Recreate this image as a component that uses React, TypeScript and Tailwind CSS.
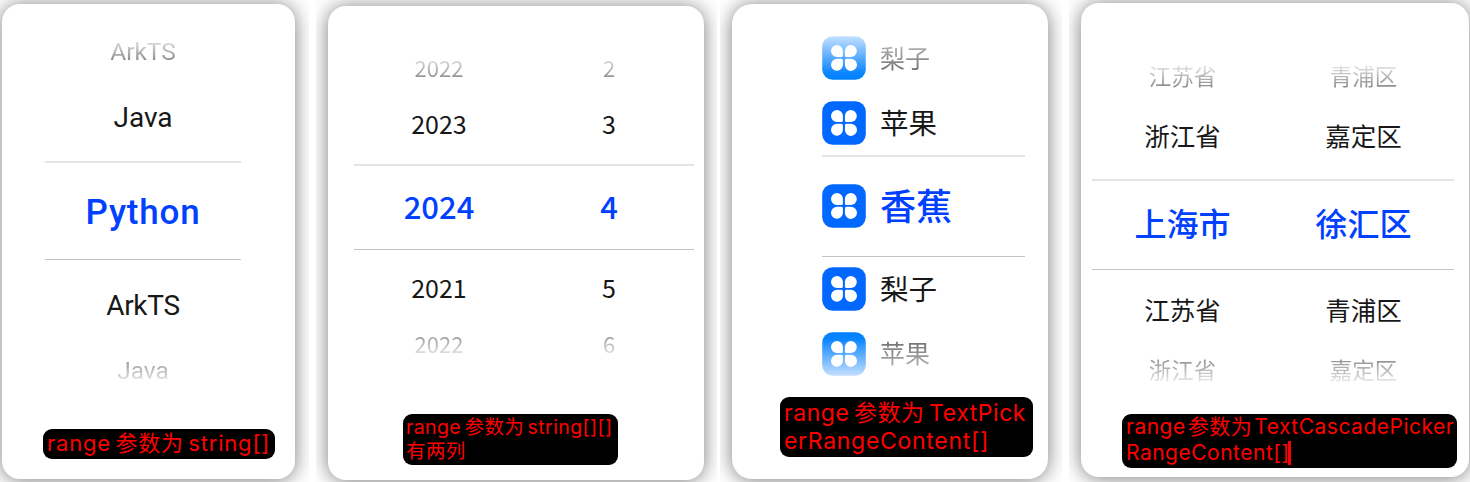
import React from "react";
import { clsx } from "clsx";

const LATIN = "font-['Roboto','Noto_Sans_CJK_SC',sans-serif]";
const CJK = "font-['Noto_Sans_CJK_SC',sans-serif]";
const LABEL = "font-['Inter','Noto_Sans_CJK_SC',sans-serif]";

const FADE_TOP = "[mask-image:linear-gradient(to_bottom,rgba(0,0,0,0.1)_20%,rgba(0,0,0,0.5)_75%)]";
const FADE_BOTTOM = "[mask-image:linear-gradient(to_top,rgba(0,0,0,0.08)_20%,rgba(0,0,0,0.46)_75%)]";

function Panel({ frame, card, children }: { frame: string; card: string; children: React.ReactNode }) {
  return (
    <section className={clsx("flex h-[482px] shrink-0 overflow-hidden", frame)}>
      <div className={clsx("flex shrink-0 flex-col bg-white shadow-[0_1px_20px_rgba(0,0,0,0.52)]", card)}>
        {children}
      </div>
    </section>
  );
}

function Row({ items, className }: { items: string[]; className: string }) {
  return (
    <div className={clsx("flex h-10 items-center whitespace-nowrap leading-none text-[#181818]", className)}>
      {items.map((item) => (
        <span key={item} className="flex-1 text-center">
          {item}
        </span>
      ))}
    </div>
  );
}

function Selected({ items, className }: { items: string[]; className: string }) {
  return (
    <div
      className={clsx(
        "flex items-center whitespace-nowrap border-b border-t-2 border-b-[#c4c4c4] border-t-[#e4e4e4] font-medium leading-none text-[#0040ff]",
        className,
      )}
    >
      {items.map((item) => (
        <span key={item} className="flex-1 text-center">
          {item}
        </span>
      ))}
    </div>
  );
}

type Fade = "top" | "bottom";

function CloverIcon({ fade }: { fade?: Fade }) {
  return (
    <svg viewBox="0 0 44 44" className="h-11 w-11 shrink-0">
      <defs>
        <linearGradient id="clover-top" x1="0" y1="0" x2="0" y2="1">
          <stop offset="0" stopColor="#c4e0ff" />
          <stop offset="0.85" stopColor="#0a84ff" />
          <stop offset="1" stopColor="#0080ff" />
        </linearGradient>
        <linearGradient id="clover-bottom" x1="0" y1="1" x2="0" y2="0">
          <stop offset="0" stopColor="#c4e0ff" />
          <stop offset="0.85" stopColor="#0a84ff" />
          <stop offset="1" stopColor="#0080ff" />
        </linearGradient>
      </defs>
      <rect
        x="0.2"
        y="0.2"
        width="43.6"
        height="43.6"
        rx="10.5"
        fill={fade ? `url(#clover-${fade})` : "#0067ff"}
      />
      <g fill="#fff">
        <path d="M15 8.9a5.9 5.9 0 0 1 5.9 5.9v4.6a1.5 1.5 0 0 1-1.5 1.5H15a6 6 0 0 1 0-12z" />
        <path d="M28.8 8.9a6 6 0 0 1 0 12h-4.4a1.5 1.5 0 0 1-1.5-1.5v-4.6a5.9 5.9 0 0 1 5.9-5.9z" />
        <path d="M15 22.8h4.4a1.5 1.5 0 0 1 1.5 1.5v4.6a5.95 5.95 0 1 1-5.9-6.1z" />
        <path d="M24.4 22.8h4.4a6.05 6.05 0 1 1-5.9 6.1v-4.6a1.5 1.5 0 0 1 1.5-1.5z" />
      </g>
    </svg>
  );
}

function IconRow({
  text,
  className,
  textClass,
  fade,
}: {
  text: string;
  className: string;
  textClass: string;
  fade?: Fade;
}) {
  return (
    <div className={clsx("flex items-center gap-[14px] whitespace-nowrap leading-none", className)}>
      <CloverIcon fade={fade} />
      <span className={clsx("bg-clip-text", textClass)}>{text}</span>
    </div>
  );
}

function Caption({ className, children }: { className: string; children: React.ReactNode }) {
  return (
    <div
      className={clsx(
        "flex flex-col justify-center whitespace-nowrap rounded-[9px] bg-black text-[#ff0000]",
        LABEL,
        className,
      )}
    >
      {children}
    </div>
  );
}

export default function App() {
  return (
    <main className="flex h-[482px] w-[1470px] overflow-hidden bg-white">
      <Panel frame="w-[309px] pl-[2px] pt-1" card={clsx("h-[475px] w-[293px] rounded-[18px] pl-[43px]", LATIN)}>
        <Row items={["ArkTS"]} className={clsx("mt-[27px] w-[196px] pt-[2px] text-[24.5px]", FADE_TOP)} />
        <Row items={["Java"]} className="mt-[26px] w-[196px] pt-[2px] text-[28px]" />
        <Selected items={["Python"]} className="mt-6 h-[99px] w-[196px] pt-[2px] text-[35px] tracking-[0.8px]" />
        <Row items={["ArkTS"]} className="mt-[25px] w-[196px] pt-[2px] text-[28px] tracking-[-0.3px]" />
        <Row items={["Java"]} className={clsx("mt-[25px] w-[196px] pt-[2px] text-[24.5px]", FADE_BOTTOM)} />
        <Caption className="-ml-[2px] mt-[39px] h-[30px] w-[232px] pb-[2px] pl-1 text-[22px] leading-[26px] tracking-[0.8px] [word-spacing:-2.5px]">
          <span>range 参数为 string[]</span>
        </Caption>
      </Panel>

      <Panel frame="ml-[7px] w-[401px] pl-3 pt-[6px]" card={clsx("h-[474px] w-[376px] rounded-[18px] pl-[26px]", CJK)}>
        <Row items={["2022", "2"]} className={clsx("mt-[43px] w-[340px] pb-[4px] text-[22px]", FADE_TOP)} />
        <Row items={["2023", "3"]} className="mt-4 w-[340px] pb-[3px] text-[25px]" />
        <Selected items={["2024", "4"]} className="mt-[19px] h-[86px] w-[340px] pb-[5px] text-[31px]" />
        <Row items={["2021", "5"]} className="mt-[18px] w-[340px] pb-[2px] text-[25px]" />
        <Row items={["2022", "6"]} className={clsx("mt-[17px] w-[340px] pb-[4px] text-[22px]", FADE_BOTTOM)} />
        <Caption className="ml-[49px] mt-[49px] h-[51px] w-[215px] pb-[2px] pl-[3px] text-[19.5px] leading-[24px] tracking-[0.4px] [word-spacing:-2.5px]">
          <span>range 参数为 string[][]</span>
          <span>有两列</span>
        </Caption>
      </Panel>

      <Panel frame="ml-[3px] w-[342px] pl-3 pt-1" card={clsx("h-[475px] w-[316px] rounded-[20px] pl-[90px]", CJK)}>
        <IconRow
          text="梨子"
          fade="top"
          className="mt-8 w-[203px] text-[25px]"
          textClass="bg-linear-to-b from-[#b4b4b4] to-[#707070] pb-[2px] text-transparent"
        />
        <IconRow text="苹果" className="mt-[21px] w-[203px] text-[28.5px]" textClass="pb-[2px] text-[#181818]" />
        <IconRow
          text="香蕉"
          className="mt-[10px] h-[102px] w-[203px] border-b border-t-2 border-b-[#c4c4c4] border-t-[#e4e4e4] pb-px text-[36px] font-medium"
          textClass="pb-[5px] text-[#0040ff]"
        />
        <IconRow text="梨子" className="mt-[10px] w-[203px] text-[28.5px]" textClass="pb-[2px] text-[#181818]" />
        <IconRow
          text="苹果"
          fade="bottom"
          className="mt-[21px] w-[203px] text-[25px]"
          textClass="bg-linear-to-t from-[#b4b4b4] to-[#707070] pb-[3px] text-transparent"
        />
        <Caption className="-ml-[42px] mt-[21px] h-[60px] w-[253px] pl-1 text-[23px] leading-[28px] tracking-[0.55px] [word-spacing:-2.5px]">
          <span>range 参数为 TextPick</span>
          <span className="tracking-[0.7px]">erRangeContent[]</span>
        </Caption>
      </Panel>

      <Panel frame="ml-[7px] w-[401px] pl-3 pt-[3px]" card={clsx("h-[474px] w-[388px] rounded-[18px] pl-[11px]", CJK)}>
        <Row items={["江苏省", "青浦区"]} className={clsx("mt-[54px] w-[362px] pb-1 text-[22.5px]", FADE_TOP)} />
        <Row items={["浙江省", "嘉定区"]} className="mt-5 w-[362px] pb-1 text-[25.5px]" />
        <Selected items={["上海市", "徐汇区"]} className="mt-[22px] h-[91px] w-[362px] pb-[6px] text-[32px]" />
        <Row items={["江苏省", "青浦区"]} className="mt-[21px] w-[362px] pb-[4px] text-[25.5px]" />
        <Row items={["浙江省", "嘉定区"]} className={clsx("mt-5 w-[362px] pb-1 text-[22.5px]", FADE_BOTTOM)} />
        <Caption className="ml-[30px] mt-[23px] h-[54px] w-[335px] pb-[2px] pl-1 text-[21px] leading-[26px] tracking-[0.5px] [word-spacing:-4.4px]">
          <span>range 参数为 TextCascadePicker</span>
          <span className="flex items-center">
            RangeContent[]
            <i className="-ml-[2px] h-6 w-[3px] bg-[#ff0000]" />
          </span>
        </Caption>
      </Panel>
    </main>
  );
}
